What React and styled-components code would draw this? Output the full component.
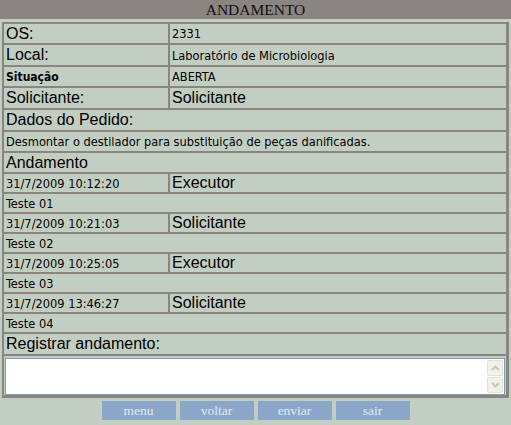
import React from 'react';
import styled, { createGlobalStyle } from 'styled-components';

const GlobalStyle = createGlobalStyle`
  body {
    margin: 0;
    background: #c3cec3;
  }
`;

const Page = styled.div`
  width: 511px;
  height: 425px;
  background: #c3cec3;
`;

const TitleBar = styled.div`
  height: 19px;
  background: #8a8581;
  display: flex;
  align-items: center;
  justify-content: center;
  font-family: "Liberation Serif", serif;
  font-size: 15.5px;
  color: #111;
`;

const Frame = styled.div`
  padding: 3px 2px 0 2px;
`;

const Table = styled.div`
  display: grid;
  grid-template-columns: 164px 1fr;
  gap: 2px;
  padding: 2px 3px 3px 2px;
  background: #8a8581;
`;

const Cell = styled.div`
  grid-column: ${p => (p.$wide ? '1 / span 2' : 'auto')};
  height: ${p => p.$h || 18}px;
  background: #c3cec3;
  display: flex;
  align-items: center;
  padding: 0 2px;
  color: #000;
  font-family: ${p => (p.$big ? '"Liberation Sans", Arial, sans-serif' : '"DejaVu Sans Condensed", "DejaVu Sans", sans-serif')};
  font-size: ${p => (p.$big ? '16px' : p.$bold ? '12px' : '12.7px')};
  font-weight: ${p => (p.$bold ? 'bold' : 'normal')};
  white-space: nowrap;
  overflow: hidden;
`;

const InputCell = styled.div`
  grid-column: 1 / span 2;
  background: #c3cec3;
  padding: 2px 1px 0 1px;
`;

const Field = styled.div`
  display: flex;
  height: 35px;
  border: 1px solid #7f9db9;
  background: #fff;
`;

const Area = styled.textarea`
  flex: 1;
  border: none;
  outline: none;
  resize: none;
  padding: 2px;
  font-family: "DejaVu Sans", sans-serif;
  font-size: 12px;
  background: transparent;
`;

const ScrollCol = styled.div`
  width: 17px;
  display: flex;
  flex-direction: column;
  justify-content: space-between;
  padding: 1px 0;
`;

const ScrollBtn = styled.div`
  width: 16px;
  height: 16px;
  background: #f1f0e9;
  border: 1px solid #e3e1d6;
  border-radius: 2px;
  display: flex;
  align-items: center;
  justify-content: center;
  box-sizing: border-box;
`;

const Buttons = styled.div`
  display: flex;
  justify-content: center;
  gap: 4px;
  margin-top: 3px;
`;

const NavButton = styled.button`
  width: 74px;
  height: 19px;
  border: none;
  padding: 0;
  background: #8aa6c8;
  color: #e3eaf2;
  font-family: "Liberation Serif", serif;
  font-size: 13.5px;
  cursor: pointer;
`;

const Chevron = ({ up }) => (
  <svg width="9" height="6" viewBox="0 0 9 6">
    <path
      d={up ? 'M1 5 L4.5 1.5 L8 5' : 'M1 1 L4.5 4.5 L8 1'}
      fill="none"
      stroke="#c9c6b6"
      strokeWidth="2"
    />
  </svg>
);

const entries = [
  { date: '31/7/2009 10:12:20', who: 'Executor', text: 'Teste 01' },
  { date: '31/7/2009 10:21:03', who: 'Solicitante', text: 'Teste 02' },
  { date: '31/7/2009 10:25:05', who: 'Executor', text: 'Teste 03' },
  { date: '31/7/2009 13:46:27', who: 'Solicitante', text: 'Teste 04' },
];

export default function App() {
  return (
    <Page>
      <GlobalStyle />
      <TitleBar>ANDAMENTO</TitleBar>
      <Frame>
        <Table>
          <Cell $big $h={19}>OS:</Cell>
          <Cell $h={19}>2331</Cell>
          <Cell $big $h={20}>Local:</Cell>
          <Cell $h={20}>Laboratório de Microbiologia</Cell>
          <Cell $bold $h={19}>Situação</Cell>
          <Cell $h={19}>ABERTA</Cell>
          <Cell $big $h={20}>Solicitante:</Cell>
          <Cell $big $h={20}>Solicitante</Cell>
          <Cell $wide $big $h={20}>Dados do Pedido:</Cell>
          <Cell $wide $h={19}>Desmontar o destilador para substituição de peças danificadas.</Cell>
          <Cell $wide $big $h={19}>Andamento</Cell>
          {entries.map(e => (
            <React.Fragment key={e.date}>
              <Cell>{e.date}</Cell>
              <Cell $big>{e.who}</Cell>
              <Cell $wide>{e.text}</Cell>
            </React.Fragment>
          ))}
          <Cell $wide $big $h={20}>Registrar andamento:</Cell>
          <InputCell>
            <Field>
              <Area />
              <ScrollCol>
                <ScrollBtn><Chevron up /></ScrollBtn>
                <ScrollBtn><Chevron /></ScrollBtn>
              </ScrollCol>
            </Field>
          </InputCell>
        </Table>
      </Frame>
      <Buttons>
        <NavButton>menu</NavButton>
        <NavButton>voltar</NavButton>
        <NavButton>enviar</NavButton>
        <NavButton>sair</NavButton>
      </Buttons>
    </Page>
  );
}
